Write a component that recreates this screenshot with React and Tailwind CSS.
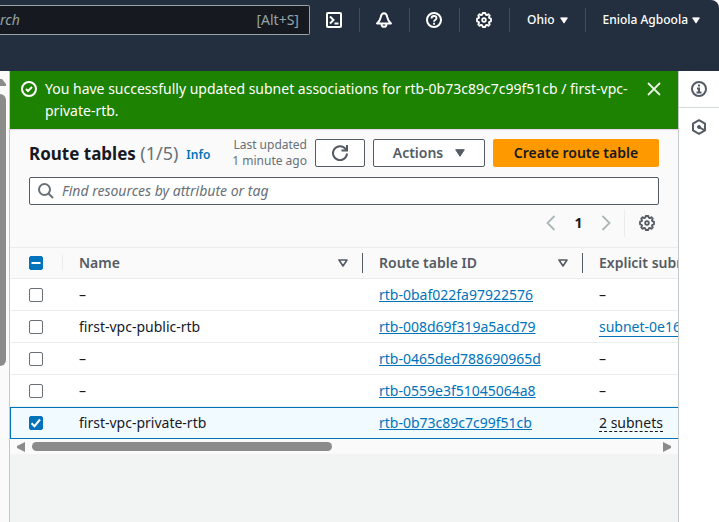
import React from "react";

const ROWS = [
  { name: "–", id: "rtb-0baf022fa97922576", subnets: "–" },
  { name: "first-vpc-public-rtb", id: "rtb-008d69f319a5acd79", subnets: "subnet-0e16", kind: "link" },
  { name: "–", id: "rtb-0465ded788690965d", subnets: "–" },
  { name: "–", id: "rtb-0559e3f51045064a8", subnets: "–" },
  { name: "first-vpc-private-rtb", id: "rtb-0b73c89c7c99f51cb", subnets: "2 subnets", kind: "popover", selected: true },
];

function Icon({ children, className = "size-4", width = 2 }) {
  return (
    <svg viewBox="0 0 16 16" className={className} fill="none" stroke="currentColor" strokeWidth={width} aria-hidden="true">
      {children}
    </svg>
  );
}

function GearIcon() {
  return (
    <Icon className="size-4" width={1.8}>
      <path d="M6.700 1h2.600l.5 1.700 1 .4 1.600-.9 1.400 1.400-.9 1.600.4 1 1.700.5v2.600l-1.700.5-.4 1 .9 1.600-1.400 1.400-1.600-.9-1 .4-.5 1.700H6.700l-.5-1.700-1-.4-1.600.9-1.400-1.400.9-1.600-.4-1L1 9.300V6.700l1.700-.5.4-1-.9-1.600 1.400-1.400 1.600.9 1-.4z" strokeLinejoin="round" />
      <circle cx="8" cy="8" r="1.800" strokeWidth="1.800" />
    </Icon>
  );
}

function Caret({ className }) {
  return (
    <svg viewBox="0 0 10 8" className={className} fill="currentColor" stroke="currentColor" strokeLinejoin="round" aria-hidden="true">
      <path d="M.7.7h8.600L5 7.300z" />
    </svg>
  );
}

function NavButton({ label, children }) {
  return (
    <button type="button" aria-label={label} className="flex h-6 w-[50px] items-center justify-center border-r border-[#414d5c]">
      {children}
    </button>
  );
}

function Header() {
  return (
    <header className="flex h-[71px] items-start rounded-tr-lg bg-[#232f3e] text-white">
      <label className="mt-[5px] flex h-[30px] min-w-0 flex-1 items-center rounded-r-xs border border-l-0 border-[#95a5a6] bg-[#161a20] pr-2.5 text-[#95a5a6]">
        <input type="text" aria-label="Search" placeholder="rch" className="min-w-0 flex-1 bg-transparent text-sm italic outline-none placeholder:text-[#95a5a6]" />
        <span className="text-sm">[Alt+S]</span>
      </label>
      <nav className="flex h-10 shrink-0 items-center text-xs font-medium">
        <NavButton label="CloudShell">
          <Icon>
            <rect x="1" y="1" width="14" height="14" rx="1" />
            <path d="M4 4.500 7.500 8 4 11.500M8.500 11.500h4" />
          </Icon>
        </NavButton>
        <NavButton label="Notifications">
          <Icon width={1.9}>
            <path d="M8 1.200C6 1.200 5.100 3 4.800 5 4.400 7.600 3.200 9.600 1 11.500h14C12.800 9.600 11.600 7.600 11.200 5 10.900 3 10 1.200 8 1.200z" strokeLinejoin="round" />
            <path d="M5.600 11.500v.9a2.400 2.400 0 0 0 4.800 0v-.9" />
          </Icon>
        </NavButton>
        <NavButton label="Help">
          <Icon>
            <circle cx="8" cy="8" r="7" />
            <path d="M5.500 6.500C5.500 4.900 6.600 4 8 4s2.500.9 2.500 2.200C10.500 7.700 8 7.700 8 9.800M8 10.800v2" strokeWidth="1.800" />
          </Icon>
        </NavButton>
        <NavButton label="Settings">
          <GearIcon />
        </NavButton>
        <button type="button" className="flex h-6 items-center gap-1.5 border-r border-[#414d5c] px-[17px]">
          Ohio
          <Caret className="h-[7px] w-2" />
        </button>
        <button type="button" className="flex h-6 items-center gap-1 pr-[19px] pl-4">
          Eniola Agboola
          <Caret className="h-[7px] w-2" />
        </button>
      </nav>
    </header>
  );
}

function Flash() {
  return (
    <div role="status" className="flex items-start border-b border-[#eacff0] bg-[#1d8102] pt-[7px] pr-4 pb-[7px] pl-[11px] text-white">
      <Icon className="mt-[3px] size-4 shrink-0">
        <circle cx="8" cy="8" r="7" />
        <path d="m5 8 2 2 4-4" />
      </Icon>
      <p className="mr-2 ml-2 flex-1 text-sm/[22px]">
        You have successfully updated subnet associations for rtb-0b73c89c7c99f51cb / first-vpc-private-rtb.
      </p>
      <button type="button" aria-label="Dismiss" className="mt-[3px] text-[#e8f3e6]">
        <Icon width={1.8}><path d="m2 2 12 12M14 2 2 14" /></Icon>
      </button>
    </div>
  );
}

function Toolbar() {
  return (
    <div className="px-[19px]">
      <div className="flex items-center pt-[7px]">
        <h1 className="text-[17px] font-bold whitespace-nowrap text-[#16191f]">
          Route tables <span className="text-lg font-normal text-[#687078]">(1/5)</span>
        </h1>
        <a href="#info" className="mt-1 ml-2 text-xs font-semibold text-[#0073bb]">Info</a>
        <p className="ml-auto text-right text-xs/4 whitespace-nowrap text-[#687078]">
          Last updated<br />1 minute ago
        </p>
        <button type="button" aria-label="Refresh" className="ml-2 flex h-7 w-[50px] items-center justify-center rounded-xs border border-[#545b64] bg-white text-[#545b64]">
          <Icon>
            <path d="M15 8.500A7 7 0 1 1 13.500 3.800L15 5.500" />
            <path d="M15 0v5.500H9.500" />
          </Icon>
        </button>
        <button type="button" className="ml-2 flex h-7 w-28 items-center justify-center gap-3 rounded-xs border border-[#545b64] bg-white text-sm font-semibold text-[#545b64]">
          Actions
          <Caret className="h-2 w-2.5" />
        </button>
        <button type="button" className="ml-2 h-7 w-[166px] rounded-xs bg-[#ff9900] text-sm font-semibold text-[#16191f]">
          Create route table
        </button>
      </div>
      <label className="mt-2 flex h-7 items-center gap-2 rounded-xs border border-[#545b64] bg-white px-2 text-[#687078]">
        <Icon className="size-4 shrink-0">
          <circle cx="6.500" cy="6.500" r="5.500" />
          <path d="m10.500 10.500 4.500 4.500" />
        </Icon>
        <input type="text" aria-label="Find resources" placeholder="Find resources by attribute or tag" className="min-w-0 flex-1 text-sm italic outline-none placeholder:text-[#687078]" />
      </label>
      <div className="flex items-center justify-end pt-1 pb-2.5 text-[#aab7b8]">
        <button type="button" aria-label="Previous page" disabled className="p-1">
          <Icon width={1.8}><path d="M11.500 1 4.500 8l7 7" /></Icon>
        </button>
        <button type="button" aria-current="page" className="w-[31px] text-sm font-bold text-[#16191f]">1</button>
        <button type="button" aria-label="Next page" disabled className="p-1">
          <Icon width={1.8}><path d="m4.500 1 7 7-7 7" /></Icon>
        </button>
        <span className="ml-1.5 h-7 w-px bg-[#eaeded]" />
        <button type="button" aria-label="Preferences" className="ml-2.5 p-1 text-[#545b64]">
          <GearIcon />
        </button>
      </div>
    </div>
  );
}

function RowCheckbox({ label, checked, mixed }) {
  return (
    <label className="grid size-3.5 place-items-center">
      <input
        type="checkbox"
        aria-label={label}
        aria-checked={mixed ? "mixed" : undefined}
        defaultChecked={checked}
        className="col-start-1 row-start-1 size-3.5 appearance-none rounded-xs border border-[#687078] bg-white checked:border-[#0073bb] checked:bg-[#0073bb]"
      />
      {checked && (
        <svg viewBox="0 0 14 14" className="pointer-events-none z-10 col-start-1 row-start-1 size-3.5" fill="none" stroke="#fff" strokeWidth="2" aria-hidden="true">
          {mixed ? <path d="M2.500 7h9" /> : <path d="m2.500 7.200 3 3 5.500-6.700" />}
        </svg>
      )}
    </label>
  );
}

function HeadCell({ children }) {
  return (
    <th scope="col" className="p-0 text-left font-semibold">
      <div className="flex h-5 items-center border-r border-[#545b64] pr-3.5 pl-4">
        <span className="flex-1">{children}</span>
        <svg viewBox="0 0 10 8" className="h-2 w-2.5" fill="none" stroke="currentColor" strokeWidth="1.600" strokeLinejoin="round" aria-hidden="true">
          <path d="M1 1h8L5 7z" />
        </svg>
      </div>
    </th>
  );
}

function Subnets({ row }) {
  if (row.kind === "link") {
    return <a href="#subnet" className="inline-block border-b border-[#0073bb] leading-[19px] text-[#0073bb]">{row.subnets}</a>;
  }
  if (row.kind === "popover") {
    return <button type="button" className="border-b border-dashed border-[#16191f] leading-4">{row.subnets}</button>;
  }
  return row.subnets;
}

function RouteTable() {
  return (
    <div className="overflow-hidden">
      <table className="w-[800px] table-fixed border-separate border-spacing-0 text-sm text-[#16191f]">
        <colgroup>
          <col className="w-[53px]" />
          <col className="w-[300px]" />
          <col className="w-[220px]" />
          <col />
        </colgroup>
        <thead className="text-[#545b64]">
          <tr className="h-8 [&>th]:border-y [&>th]:border-[#eaeded]">
            <th scope="col" className="p-0">
              <div className="flex h-4 items-center border-r border-[#eaeded] pl-[19px]">
                <RowCheckbox label="Select all" checked mixed />
              </div>
            </th>
            <HeadCell>Name</HeadCell>
            <HeadCell>Route table ID</HeadCell>
            <th scope="col" className="p-0 pl-4 text-left font-semibold whitespace-nowrap">Explicit subnet associations</th>
          </tr>
        </thead>
        <tbody>
          {ROWS.map((row) => (
            <tr
              key={row.id}
              className={
                row.selected
                  ? "h-8 bg-[#f1faff] [&>td]:border-y [&>td]:border-[#0073bb]"
                  : "h-8 bg-white [&>td]:border-b [&>td]:border-[#eaeded]"
              }
            >
              <td className={row.selected ? "border-l p-0 pl-[18px]" : "p-0 pl-[19px]"}>
                <RowCheckbox label={"Select " + row.id} checked={row.selected} />
              </td>
              <td className="p-0 pl-4">{row.name}</td>
              <td className="p-0 pl-4">
                <a href="#route-table" className="text-[#0073bb] underline underline-offset-1">{row.id}</a>
              </td>
              <td className="p-0 pl-4"><Subnets row={row} /></td>
            </tr>
          ))}
        </tbody>
      </table>
      <div className="flex h-[15px] items-center px-[7px] text-[#8b8b8b]" aria-hidden="true">
        <svg viewBox="0 0 8 10" className="h-2.5 w-2" fill="currentColor"><path d="M8 0v10L0 6V4z" /></svg>
        <div className="mx-[7px] flex-1">
          <div className="h-[9px] w-[48%] rounded-full bg-[#8b8b8b]" />
        </div>
        <svg viewBox="0 0 8 10" className="h-2.5 w-2" fill="currentColor"><path d="M0 0v10l8-4V4z" /></svg>
      </div>
    </div>
  );
}

export default function App() {
  return (
    <div className="bg-white">
      <div className="flex min-h-screen flex-col font-['Noto_Sans','Open_Sans',sans-serif]">
        <Header />
        <div className="flex min-w-0 flex-1">
          <div className="w-[9px] shrink-0 bg-[#fafafa] pt-2" aria-hidden="true">
            <svg viewBox="0 0 6 8" className="h-2 w-1.5" fill="#8b8b8b"><path d="M0 0h2l4 5v2H0z" /></svg>
            <div className="mt-[7px] h-[272px] w-1.5 rounded-r-md bg-[#8b8b8b]" />
          </div>
          <main className="min-w-0 flex-1 border-x border-[#c4c9cd] bg-[#f2f3f3]">
            <Flash />
            <section className="bg-[#fafafa]">
              <Toolbar />
              <RouteTable />
            </section>
          </main>
          <aside className="flex w-10 shrink-0 flex-col bg-white text-[#545b64]">
            <button type="button" aria-label="Info panel" className="flex h-[37px] items-center justify-center border-b border-[#d5dbdb]">
              <Icon>
                <circle cx="8" cy="8" r="7" />
                <path d="M8 3.500v2M6 7.500h2v4M5.500 11.500h5" />
              </Icon>
            </button>
            <button type="button" aria-label="Diagnostics" className="flex h-[37px] items-center justify-center">
              <Icon>
                <path d="m8 1.200 6 3.400v6.800l-6 3.400-6-3.400V4.600z" strokeLinejoin="round" />
                <circle cx="8" cy="8" r="1.500" fill="currentColor" strokeWidth="1" />
                <path d="m8 8 5 3" />
              </Icon>
            </button>
          </aside>
        </div>
      </div>
    </div>
  );
}
